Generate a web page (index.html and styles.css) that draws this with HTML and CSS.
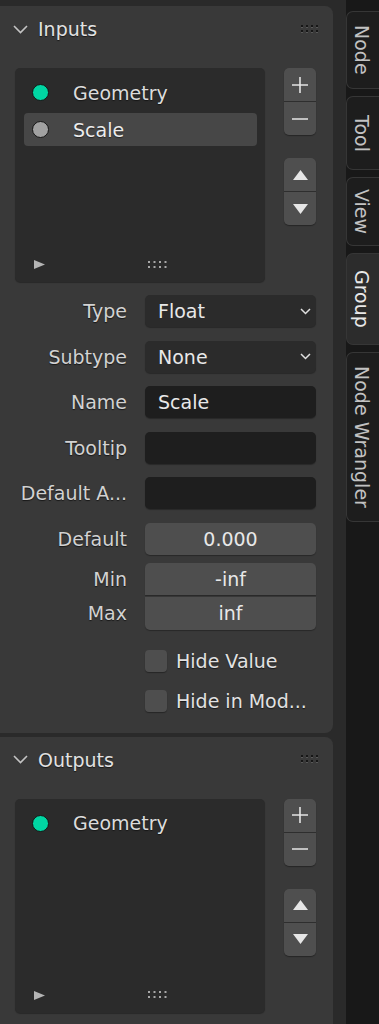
FILE: index.html
```html
<!DOCTYPE html>
<html lang="en">

<head>
	<meta charset="UTF-8">
	<meta name="viewport" content="width=device-width, initial-scale=1.0">
	<title>Group sidebar</title>

	<link rel="stylesheet" href="styles.css">
</head>

<body>
	<div class="screen">
		<main class="region">
			<section class="panel">
				<header class="panel-header">
					<svg class="chevron" width="15" height="9" viewBox="0 0 15 9"><polyline points="1,1 7.5,7.5 14,1" /></svg>
					<span class="panel-title">Inputs</span>
					<svg class="grip" width="20" height="9" viewBox="0 0 20 9">
						<g class="grip-light"><rect x="0" y="1" width="2" height="2" /><rect x="5" y="1" width="2" height="2" /><rect x="10" y="1" width="2" height="2" /><rect x="15" y="1" width="2" height="2" /><rect x="0" y="6" width="2" height="2" /><rect x="5" y="6" width="2" height="2" /><rect x="10" y="6" width="2" height="2" /><rect x="15" y="6" width="2" height="2" /></g>
						<g class="grip-dark"><rect x="0" y="0" width="2" height="2" /><rect x="5" y="0" width="2" height="2" /><rect x="10" y="0" width="2" height="2" /><rect x="15" y="0" width="2" height="2" /><rect x="0" y="5" width="2" height="2" /><rect x="5" y="5" width="2" height="2" /><rect x="10" y="5" width="2" height="2" /><rect x="15" y="5" width="2" height="2" /></g>
					</svg>
				</header>

				<div class="panel-body">
					<div class="list-row">
						<div class="list-box">
							<div class="list-item"><span class="socket socket-geometry"></span>Geometry</div>
							<div class="list-item active"><span class="socket socket-float"></span>Scale</div>
							<div class="list-footer">
								<svg width="11" height="9" viewBox="0 0 11 9"><polygon points="0,0 11,4.5 0,9" /></svg>
								<svg class="list-grip" width="20" height="8" viewBox="0 0 20 8"><rect x="0" y="0" width="2" height="2" /><rect x="5.5" y="0" width="2" height="2" /><rect x="11" y="0" width="2" height="2" /><rect x="16.5" y="0" width="2" height="2" /><rect x="0" y="5" width="2" height="2" /><rect x="5.5" y="5" width="2" height="2" /><rect x="11" y="5" width="2" height="2" /><rect x="16.5" y="5" width="2" height="2" /></svg>
							</div>
						</div>
						<div class="list-tools">
							<div class="button-group">
								<button class="tool-button"><svg width="16" height="16" viewBox="0 0 16 16"><path d="M8 0v16M0 8h16" /></svg></button>
								<button class="tool-button"><svg width="16" height="16" viewBox="0 0 16 16"><path d="M0 8h16" /></svg></button>
							</div>
							<div class="button-group">
								<button class="tool-button"><svg width="15" height="10" viewBox="0 0 15 10"><polygon points="0,10 7.5,0 15,10" /></svg></button>
								<button class="tool-button"><svg width="15" height="10" viewBox="0 0 15 10"><polygon points="0,0 15,0 7.5,10" /></svg></button>
							</div>
						</div>
					</div>

					<div class="props">
						<div class="prop-row">
							<span class="prop-label">Type</span>
							<div class="field field-select">Float<svg width="11" height="7" viewBox="0 0 11 7"><polyline points="1,1 5.5,5.5 10,1" /></svg></div>
						</div>
						<div class="prop-row">
							<span class="prop-label">Subtype</span>
							<div class="field field-select">None<svg width="11" height="7" viewBox="0 0 11 7"><polyline points="1,1 5.5,5.5 10,1" /></svg></div>
						</div>
						<div class="prop-row">
							<span class="prop-label">Name</span>
							<div class="field field-text">Scale</div>
						</div>
						<div class="prop-row">
							<span class="prop-label">Tooltip</span>
							<div class="field field-text"></div>
						</div>
						<div class="prop-row">
							<span class="prop-label">Default A...</span>
							<div class="field field-text"></div>
						</div>
						<div class="prop-row">
							<span class="prop-label">Default</span>
							<div class="field field-number">0.000</div>
						</div>
					</div>

					<div class="range">
						<div class="prop-row range-min">
							<span class="prop-label">Min</span>
							<div class="field field-number">-inf</div>
						</div>
						<div class="prop-row range-max">
							<span class="prop-label">Max</span>
							<div class="field field-number">inf</div>
						</div>
					</div>

					<div class="checks">
						<label class="check-row"><span class="checkbox"></span>Hide Value</label>
						<label class="check-row"><span class="checkbox"></span>Hide in Mod...</label>
					</div>
				</div>
			</section>

			<section class="panel panel-last">
				<header class="panel-header">
					<svg class="chevron" width="15" height="9" viewBox="0 0 15 9"><polyline points="1,1 7.5,7.5 14,1" /></svg>
					<span class="panel-title">Outputs</span>
					<svg class="grip" width="20" height="9" viewBox="0 0 20 9">
						<g class="grip-light"><rect x="0" y="1" width="2" height="2" /><rect x="5" y="1" width="2" height="2" /><rect x="10" y="1" width="2" height="2" /><rect x="15" y="1" width="2" height="2" /><rect x="0" y="6" width="2" height="2" /><rect x="5" y="6" width="2" height="2" /><rect x="10" y="6" width="2" height="2" /><rect x="15" y="6" width="2" height="2" /></g>
						<g class="grip-dark"><rect x="0" y="0" width="2" height="2" /><rect x="5" y="0" width="2" height="2" /><rect x="10" y="0" width="2" height="2" /><rect x="15" y="0" width="2" height="2" /><rect x="0" y="5" width="2" height="2" /><rect x="5" y="5" width="2" height="2" /><rect x="10" y="5" width="2" height="2" /><rect x="15" y="5" width="2" height="2" /></g>
					</svg>
				</header>

				<div class="panel-body">
					<div class="list-row">
						<div class="list-box">
							<div class="list-item"><span class="socket socket-geometry"></span>Geometry</div>
							<div class="list-footer">
								<svg width="11" height="9" viewBox="0 0 11 9"><polygon points="0,0 11,4.5 0,9" /></svg>
								<svg class="list-grip" width="20" height="8" viewBox="0 0 20 8"><rect x="0" y="0" width="2" height="2" /><rect x="5.5" y="0" width="2" height="2" /><rect x="11" y="0" width="2" height="2" /><rect x="16.5" y="0" width="2" height="2" /><rect x="0" y="5" width="2" height="2" /><rect x="5.5" y="5" width="2" height="2" /><rect x="11" y="5" width="2" height="2" /><rect x="16.5" y="5" width="2" height="2" /></svg>
							</div>
						</div>
						<div class="list-tools">
							<div class="button-group">
								<button class="tool-button"><svg width="16" height="16" viewBox="0 0 16 16"><path d="M8 0v16M0 8h16" /></svg></button>
								<button class="tool-button"><svg width="16" height="16" viewBox="0 0 16 16"><path d="M0 8h16" /></svg></button>
							</div>
							<div class="button-group">
								<button class="tool-button"><svg width="15" height="10" viewBox="0 0 15 10"><polygon points="0,10 7.5,0 15,10" /></svg></button>
								<button class="tool-button"><svg width="15" height="10" viewBox="0 0 15 10"><polygon points="0,0 15,0 7.5,10" /></svg></button>
							</div>
						</div>
					</div>
				</div>
			</section>
		</main>

		<nav class="tabs">
			<div class="tab tab-node"><span>Node</span></div>
			<div class="tab tab-tool"><span>Tool</span></div>
			<div class="tab tab-view"><span>View</span></div>
			<div class="tab tab-group active"><span>Group</span></div>
			<div class="tab tab-wrangler"><span>Node Wrangler</span></div>
		</nav>
	</div>
</body>

</html>
```

FILE: styles.css
```css
*,
*::before,
*::after {
	margin: 0;
	padding: 0;
	box-sizing: border-box;
}

body {
	background-color: #2a2a2a;
	color: #e6e6e6;
	font-family: "DejaVu Sans", "Noto Sans", sans-serif;
	font-size: 19px;
	overflow: hidden;
}

.screen {
	width: 379px;
	height: 1024px;

	display: flex;
	overflow: hidden;
}

/* left region with the panels */

.region {
	width: 346px;
	flex-shrink: 0;
	padding: 6px 13px 0 0;

	display: flex;
	flex-direction: column;
	gap: 4px;

	background-color: #2a2a2a;
}

.panel {
	padding: 0 17px 21px 15px;

	border-radius: 0 8px 8px 0;
	background-color: #393939;
}

.panel-last {
	flex: 1;
}

.panel-header {
	height: 46px;
	margin: 0 -17px 0 -15px;
	padding: 0 12px 0 13px;

	display: flex;
	align-items: center;
	gap: 10px;
}

.chevron polyline {
	fill: none;
	stroke: #c4c4c4;
	stroke-width: 1.6;
}

.panel-title {
	flex: 1;
	color: #e2e2e2;
	text-shadow: 0 1px 1px rgba(0, 0, 0, 0.6);
}

.grip-light rect {
	fill: #585858;
}

.grip-dark rect {
	fill: #161616;
}

.panel-body {
	padding-top: 16px;
}

/* ui list */

.list-row {
	display: grid;
	grid-template-columns: 250px 32px;
	column-gap: 19px;
}

.list-box {
	height: 214px;
	padding: 8px 8px 13px 9px;

	display: flex;
	flex-direction: column;
	gap: 4px;

	border-radius: 5px;
	background-color: #2b2b2b;
	box-shadow: 0 1px 1px rgba(0, 0, 0, 0.3);
}

.list-item {
	height: 33px;
	padding-left: 8px;

	display: flex;
	align-items: center;
	gap: 24px;

	border-radius: 4px;
	color: #dcdcdc;
	text-shadow: 0 1px 1px rgba(0, 0, 0, 0.5);
}

.list-item.active {
	background-color: #474747;
	color: #ececec;
}

.socket {
	width: 17px;
	height: 17px;

	border: 1.5px solid #151515;
	border-radius: 50%;
}

.socket-geometry {
	background-color: #00d6a3;
}

.socket-float {
	background-color: #a1a1a1;
}

.list-footer {
	margin-top: auto;
	padding-left: 10px;

	display: flex;
	align-items: center;
	gap: 103px;
}

.list-footer polygon {
	fill: #b4b4b4;
}

.list-grip rect {
	fill: #a8a8a8;
}

.list-tools {
	display: flex;
	flex-direction: column;
	gap: 23px;
}

.button-group {
	display: flex;
	flex-direction: column;
	gap: 1px;

	border-radius: 5px;
	overflow: hidden;
	background-color: #2e2e2e;
	box-shadow: 0 1px 1px rgba(0, 0, 0, 0.35);
}

.tool-button {
	height: 33px;

	display: flex;
	justify-content: center;
	align-items: center;

	border: none;
	background-color: #4f4f4f;
}

.tool-button path {
	stroke: #e4e4e4;
	stroke-width: 1.6;
}

.tool-button polygon {
	fill: #e6e6e6;
}

/* properties */

.props {
	margin-top: 13px;

	display: flex;
	flex-direction: column;
	gap: 13.5px;
}

.prop-row {
	height: 32px;

	display: grid;
	grid-template-columns: 112px 171px;
	column-gap: 18px;
	align-items: center;
}

.prop-label {
	text-align: right;
	color: #d2d2d2;
	white-space: nowrap;
	text-shadow: 0 1px 1px rgba(0, 0, 0, 0.6);
}

.field {
	height: 100%;
	padding: 0 5px 0 13px;

	display: flex;
	align-items: center;
	justify-content: space-between;

	border-radius: 5px;
	color: #e8e8e8;
	box-shadow: 0 1px 1px rgba(0, 0, 0, 0.3);
}

.field-select {
	background-color: #2b2b2b;
}

.field-select polyline {
	fill: none;
	stroke: #e0e0e0;
	stroke-width: 1.5;
}

.field-text {
	background-color: #1e1e1e;
}

.field-number {
	padding: 0;
	justify-content: center;
	background-color: #4e4e4e;
}

.range {
	margin-top: 8px;

	display: flex;
	flex-direction: column;
	gap: 2px;
}

.range-max {
	height: 33px;
}

.range-min .field {
	border-radius: 5px 5px 0 0;
}

.range-max .field {
	border-radius: 0 0 5px 5px;
}

.checks {
	margin-top: 20px;
	padding-left: 130px;

	display: flex;
	flex-direction: column;
	gap: 18px;
}

.check-row {
	height: 22px;

	display: flex;
	align-items: center;
	gap: 9px;

	color: #e2e2e2;
	white-space: nowrap;
	text-shadow: 0 1px 1px rgba(0, 0, 0, 0.6);
}

.checkbox {
	width: 22px;
	height: 22px;

	border-radius: 4px;
	background-color: #4e4e4e;
	box-shadow: 0 1px 1px rgba(0, 0, 0, 0.35);
}

/* side tabs */

.tabs {
	flex: 1;
	padding-top: 11px;

	display: flex;
	flex-direction: column;
	gap: 7px;

	background-color: #181818;
}

.tab {
	width: 34px;
	padding-right: 3px;

	display: flex;
	justify-content: center;
	align-items: center;

	border: 1px solid #363636;
	border-right: none;
	border-radius: 7px 0 0 7px;
	background-color: #1d1d1d;
	color: #c2c2c2;
}

.tab span {
	writing-mode: vertical-rl;
	white-space: nowrap;
}

.tab.active {
	background-color: #2c2c2c;
	color: #e8e8e8;
}

.tab-node {
	height: 78px;
}

.tab-tool {
	height: 74px;
}

.tab-view {
	height: 69px;
}

.tab-group {
	height: 92px;
}

.tab-wrangler {
	height: 170px;
}
```
